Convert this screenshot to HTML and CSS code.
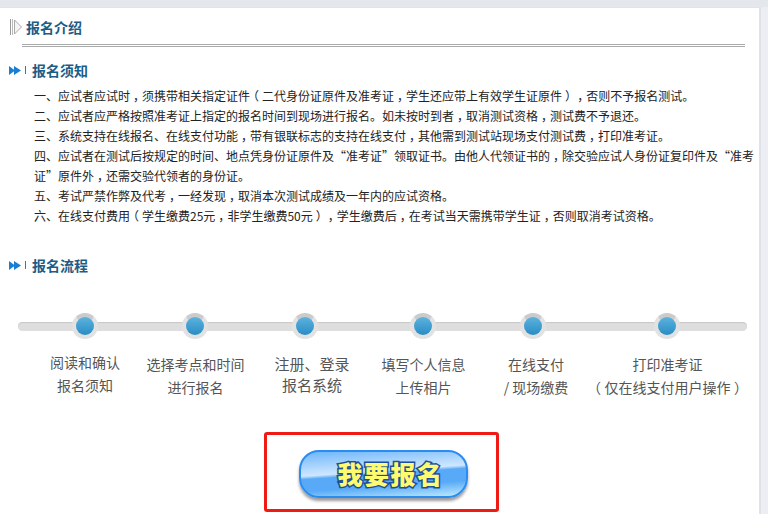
FILE: index.html
```html
<!DOCTYPE HTML>
<html>

<head>
    <title>报名介绍</title>
    <meta http-equiv="Content-Type" content="text/html; charset=utf-8" />
    <link rel="stylesheet" href="styles.css">
</head>

<body>
    <div class="wrap">
        <div class="title">
            <svg class="title_icon" width="12" height="16" viewBox="0 0 12 16">
                <path d="M0.5 0V16" stroke="#999" fill="none" />
                <path d="M2.5 0V16" stroke="#bbb" fill="none" />
                <path d="M4.5 1L11.5 8L4.5 15Z" stroke="#aaa" fill="#f4f4f4" />
            </svg>
            <span>报名介绍</span>
        </div>
        <div class="title_line"></div>

        <div class="sub">
            <svg width="12" height="9" viewBox="0 0 12 9">
                <path d="M0 0L6 4.5L0 9ZM5 0L12 4.5L5 9Z" fill="#1a7fd0" />
            </svg>
            <i class="sub_bar"></i>
            <span>报名须知</span>
        </div>
        <div class="notice">
            <p>一、应试者应试时<span class="pn">，</span>须携带相关指定证件<span class="pn">（</span>二代身份证原件及准考证<span class="pn">，</span>学生还应带上有效学生证原件<span class="pn">）</span><span class="pn">，</span>否则不予报名测试。</p>
            <p>二、应试者应严格按照准考证上指定的报名时间到现场进行报名。如未按时到者<span class="pn">，</span>取消测试资格<span class="pn">，</span>测试费不予退还。</p>
            <p>三、系统支持在线报名、在线支付功能<span class="pn">，</span>带有银联标志的支持在线支付<span class="pn">，</span>其他需到测试站现场支付测试费<span class="pn">，</span>打印准考证。</p>
            <p>四、应试者在测试后按规定的时间、地点凭身份证原件及“准考证”领取证书。由他人代领证书的<span class="pn">，</span>除交验应试人身份证复印件及“准考<br>证”原件外<span class="pn">，</span>还需交验代领者的身份证。</p>
            <p>五、考试严禁作弊及代考<span class="pn">，</span>一经发现<span class="pn">，</span>取消本次测试成绩及一年内的应试资格。</p>
            <p>六、在线支付费用<span class="pn">（</span>学生缴费25元<span class="pn">，</span>非学生缴费50元<span class="pn">）</span><span class="pn">，</span>学生缴费后<span class="pn">，</span>在考试当天需携带学生证<span class="pn">，</span>否则取消考试资格。</p>
        </div>

        <div class="sub sub_flow">
            <svg width="12" height="9" viewBox="0 0 12 9">
                <path d="M0 0L6 4.5L0 9ZM5 0L12 4.5L5 9Z" fill="#1a7fd0" />
            </svg>
            <i class="sub_bar"></i>
            <span>报名流程</span>
        </div>
        <div class="flow">
            <div class="track"></div>
            <div class="step w110">
                <div class="dot"></div>
                <div class="label">阅读和确认<br>报名须知</div>
            </div>
            <div class="step w110 low">
                <div class="dot"></div>
                <div class="label">选择考点和时间<br>进行报名</div>
            </div>
            <div class="step w110 big">
                <div class="dot"></div>
                <div class="label">注册、登录<br>报名系统</div>
            </div>
            <div class="step w126 low">
                <div class="dot"></div>
                <div class="label">填写个人信息<br>上传相片</div>
            </div>
            <div class="step w94 low">
                <div class="dot"></div>
                <div class="label pay">在线支付<br>/ 现场缴费</div>
            </div>
            <div class="step w174 low">
                <div class="dot"></div>
                <div class="label">打印准考证<br><span class="pn">（</span>仅在线支付用户操作<span class="pn">）</span></div>
            </div>
        </div>

        <div class="apply">
            <div class="apply_box">
                <div class="apply_btn">我要报名</div>
            </div>
        </div>
    </div>
</body>

</html>
```

FILE: styles.css
```css
html,
body {
    margin: 0;
    padding: 0;
    height: 514px;
    overflow: hidden;
    background: #eceef3;
    font-family: "Noto Sans CJK SC", "Liberation Sans", sans-serif;
    text-spacing-trim: space-all;
}

body {
    border-top: 7px solid #e4e7ec;
    box-sizing: border-box;
}

.wrap {
    width: 761px;
    height: 507px;
    border-top: 1px solid #dfe2e7;
    border-right: 2px solid #dfe2e7;
    box-sizing: border-box;
    background: #fff;
    overflow: hidden;
}

.title {
    display: flex;
    align-items: center;
    height: 20px;
    margin: 9px 0 0 10px;
    font-size: 14px;
    font-weight: bold;
    color: #1d5c85;
}

.title_icon {
    margin-right: 4px;
}

.title_line {
    height: 1px;
    margin: 7px 14px 0 22px;
    border-top: 1px solid #aaa;
    border-bottom: 1px solid #aaa;
}

.sub {
    display: flex;
    align-items: center;
    height: 20px;
    margin: 13px 0 0 9px;
    font-size: 14px;
    font-weight: bold;
    color: #1d5c85;
}

.sub_flow {
    margin-top: 29px;
}

.sub_bar {
    width: 1px;
    height: 8px;
    margin: 0 6px 0 4px;
    background: #1a7fd0;
}

.notice {
    margin: 6px 4px 0 34px;
    font-size: 12px;
    line-height: 20px;
    color: #222;
}

.notice p {
    margin: 0;
}

/* 半宽标点加左右留白，标点落在字框中间 */
.pn {
    padding: 0 .25em;
    font-feature-settings: "halt";
}

.flow {
    position: relative;
    display: flex;
    height: 119px;
    margin: 38px 0 0 30px;
}

.track {
    position: absolute;
    left: -12px;
    top: 9px;
    width: 729px;
    height: 9px;
    border-radius: 5px;
    background: #dedede;
    box-shadow: inset 0 1px 1px #c8c8c8;
}

.step {
    position: relative;
    text-align: center;
}

.w110 {
    width: 110px;
}

.w126 {
    width: 126px;
}

.w94 {
    width: 94px;
}

.w174 {
    width: 174px;
}

.dot {
    width: 18px;
    height: 18px;
    margin: 0 auto;
    border: 4px solid #e2e2e2;
    border-top-color: #cbcbcb;
    border-radius: 50%;
    background: linear-gradient(#5cb3de, #2a8cc4);
}

.label {
    margin-top: 12px;
    font-size: 14px;
    line-height: 23px;
    color: #555;
}

.low .label {
    margin-top: 14px;
    padding-left: 1px;
}

.big .label {
    margin-top: 14px;
    padding-left: 14px;
    font-size: 15px;
    line-height: 21px;
}

.low .pay {
    padding-left: 6px;
}

.apply {
    display: flex;
    margin-left: 264px;
}

.apply_box {
    display: flex;
    align-items: center;
    justify-content: center;
    width: 235px;
    height: 80px;
    box-sizing: border-box;
    padding: 4px 0 0 4px;
    border: 3px solid #f01a14;
    border-radius: 3px;
}

.apply_btn {
    width: 169px;
    height: 48px;
    box-sizing: border-box;
    padding-left: 14px;
    border: 2px solid #2a8cf0;
    border-radius: 20px;
    background: linear-gradient(176deg, #6db6fb 0%, #cfe7ff 44%, #58a9f7 50%, #58aaf7 72%, #bfeaff 100%);
    box-shadow: 0 3px 3px rgba(60, 60, 60, .5);
    text-align: center;
    font-size: 25px;
    font-weight: 900;
    line-height: 42px;
    letter-spacing: 1.5px;
    color: #fffb6e;
    -webkit-text-stroke: 3px #1d4f9a;
    paint-order: stroke fill;
}
```
